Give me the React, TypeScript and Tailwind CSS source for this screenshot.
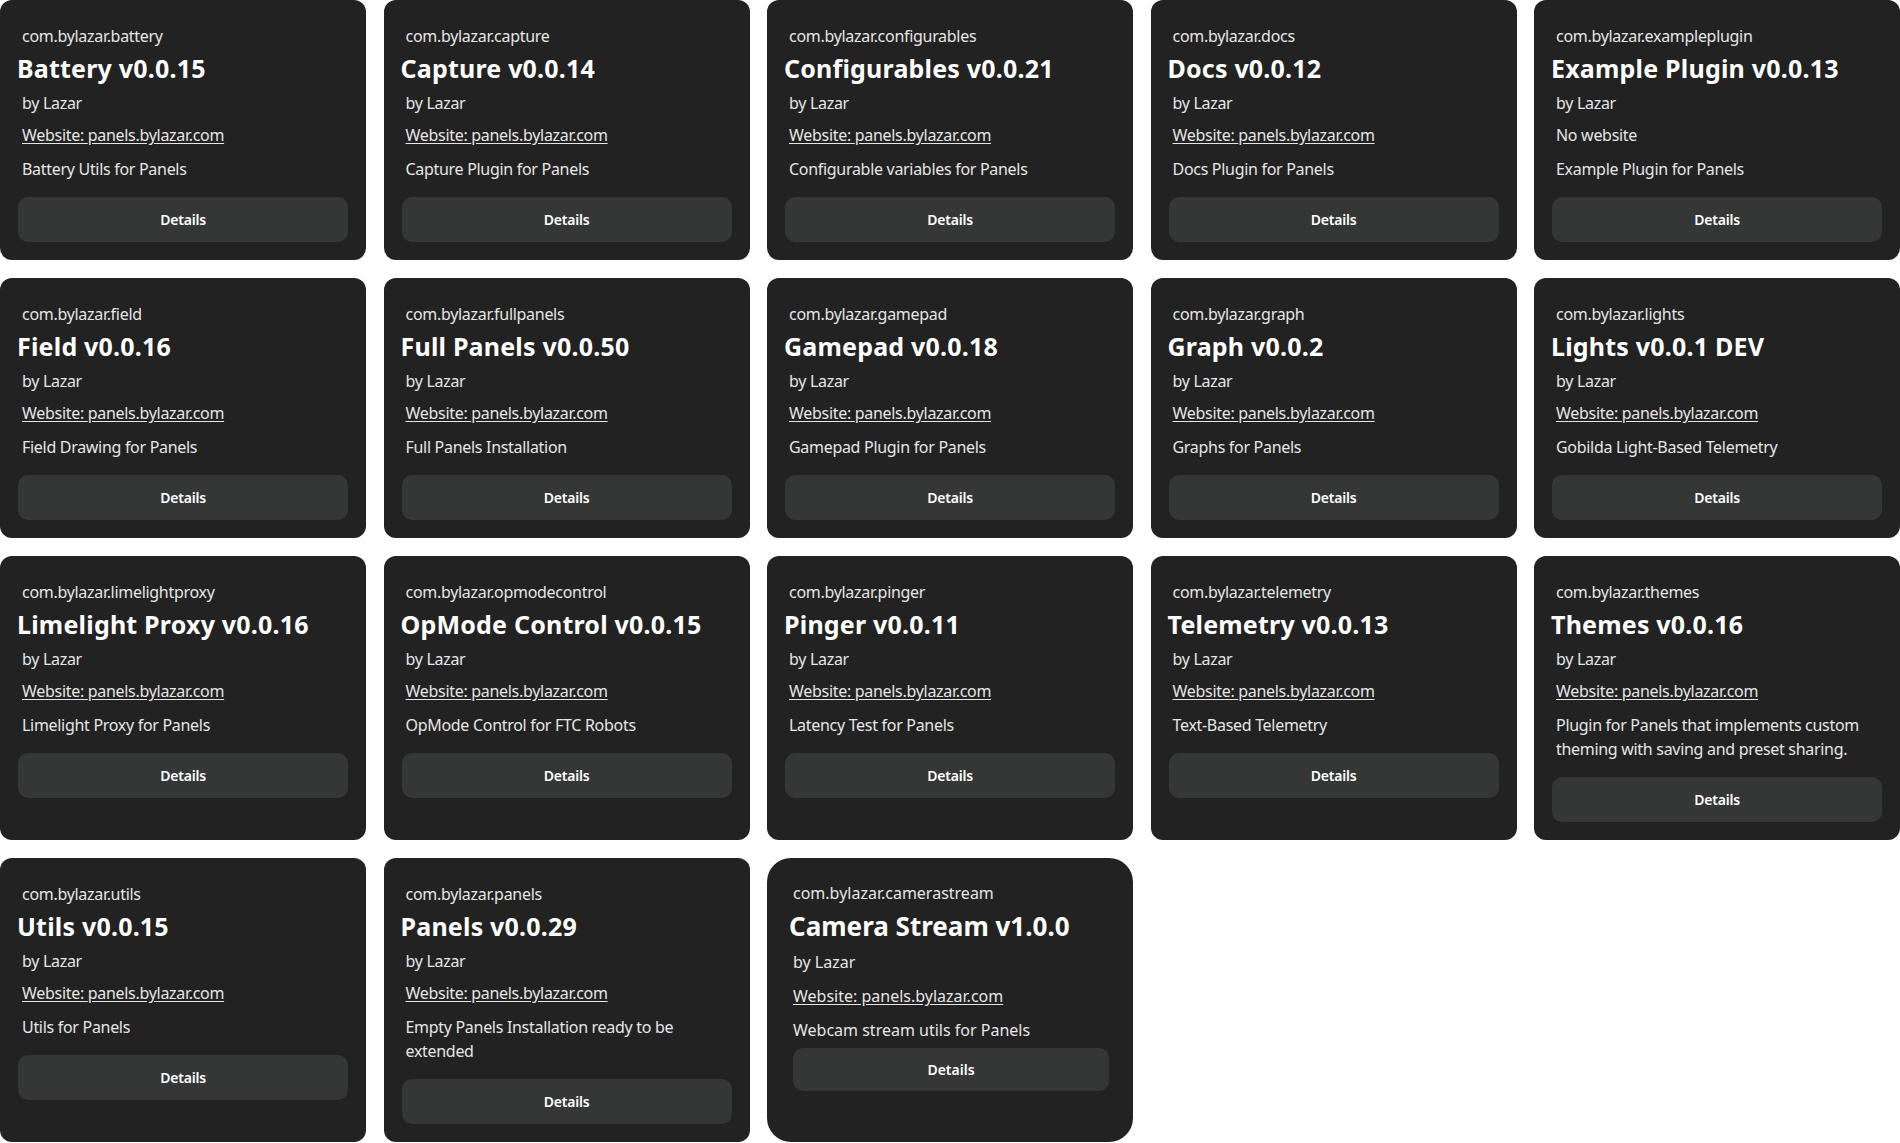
type Plugin = {
  id: string;
  name: string;
  version: string;
  website?: string;
  description: string;
};

const plugins: Plugin[] = [
  { id: "com.bylazar.battery", name: "Battery", version: "v0.0.15", website: "panels.bylazar.com", description: "Battery Utils for Panels" },
  { id: "com.bylazar.capture", name: "Capture", version: "v0.0.14", website: "panels.bylazar.com", description: "Capture Plugin for Panels" },
  { id: "com.bylazar.configurables", name: "Configurables", version: "v0.0.21", website: "panels.bylazar.com", description: "Configurable variables for Panels" },
  { id: "com.bylazar.docs", name: "Docs", version: "v0.0.12", website: "panels.bylazar.com", description: "Docs Plugin for Panels" },
  { id: "com.bylazar.exampleplugin", name: "Example Plugin", version: "v0.0.13", description: "Example Plugin for Panels" },
  { id: "com.bylazar.field", name: "Field", version: "v0.0.16", website: "panels.bylazar.com", description: "Field Drawing for Panels" },
  { id: "com.bylazar.fullpanels", name: "Full Panels", version: "v0.0.50", website: "panels.bylazar.com", description: "Full Panels Installation" },
  { id: "com.bylazar.gamepad", name: "Gamepad", version: "v0.0.18", website: "panels.bylazar.com", description: "Gamepad Plugin for Panels" },
  { id: "com.bylazar.graph", name: "Graph", version: "v0.0.2", website: "panels.bylazar.com", description: "Graphs for Panels" },
  { id: "com.bylazar.lights", name: "Lights", version: "v0.0.1 DEV", website: "panels.bylazar.com", description: "Gobilda Light-Based Telemetry" },
  { id: "com.bylazar.limelightproxy", name: "Limelight Proxy", version: "v0.0.16", website: "panels.bylazar.com", description: "Limelight Proxy for Panels" },
  { id: "com.bylazar.opmodecontrol", name: "OpMode Control", version: "v0.0.15", website: "panels.bylazar.com", description: "OpMode Control for FTC Robots" },
  { id: "com.bylazar.pinger", name: "Pinger", version: "v0.0.11", website: "panels.bylazar.com", description: "Latency Test for Panels" },
  { id: "com.bylazar.telemetry", name: "Telemetry", version: "v0.0.13", website: "panels.bylazar.com", description: "Text-Based Telemetry" },
  { id: "com.bylazar.themes", name: "Themes", version: "v0.0.16", website: "panels.bylazar.com", description: "Plugin for Panels that implements custom theming with saving and preset sharing." },
  { id: "com.bylazar.utils", name: "Utils", version: "v0.0.15", website: "panels.bylazar.com", description: "Utils for Panels" },
  { id: "com.bylazar.panels", name: "Panels", version: "v0.0.29", website: "panels.bylazar.com", description: "Empty Panels Installation ready to be extended" },
];

function PluginCard({ p }: { p: Plugin }) {
  return (
    <div className="bg-[#212221] rounded-[12px] px-[18px] pt-[24px] pb-[18px] flex flex-col text-[#e6e6e6]">
      <div className="ml-1 text-[16px] leading-[24px] tracking-[-0.3px]">{p.id}</div>
      <h2 className="-ml-px mt-1 text-[25px] leading-[32px] font-bold text-white tracking-[0.2px]">
        {p.name} {p.version}
      </h2>
      <div className="ml-1 mt-[7px] text-[16px] leading-[24px] tracking-[-0.3px]">by Lazar</div>
      {p.website ? (
        <a href="#" className="ml-1 mt-2 text-[16px] leading-[24px] tracking-[-0.3px] underline underline-offset-2 self-start">
          Website: {p.website}
        </a>
      ) : (
        <div className="ml-1 mt-2 text-[16px] leading-[24px] tracking-[-0.3px]">No website</div>
      )}
      <p className="ml-1 mt-[10px] text-[16px] leading-[24px] tracking-[-0.3px]">{p.description}</p>
      <button className="mt-4 h-[45px] w-full rounded-[10px] bg-[#353636] text-[14px] font-semibold text-white tracking-[-0.2px]">
        Details
      </button>
    </div>
  );
}

function CameraCard() {
  return (
    <div className="bg-[#212221] rounded-[24px] pl-[26px] pr-[24px] pt-[23px] pb-[18px] flex flex-col text-[#e6e6e6]">
      <div className="text-[16px] leading-[24px]">com.bylazar.camerastream</div>
      <h2 className="-ml-1 mt-1 text-[26px] leading-[34px] font-bold text-white">Camera Stream v1.0.0</h2>
      <div className="mt-[7px] text-[16px] leading-[24px]">by Lazar</div>
      <a href="#" className="mt-[10px] text-[16px] leading-[24px] underline underline-offset-2 self-start">
        Website: panels.bylazar.com
      </a>
      <p className="mt-[10px] text-[16px] leading-[24px]">Webcam stream utils for Panels</p>
      <button className="mt-[6px] h-[43px] w-full rounded-[10px] bg-[#353636] text-[14px] font-semibold text-white">
        Details
      </button>
    </div>
  );
}

export default function App() {
  return (
    <div className="min-h-screen bg-white font-['Noto_Sans',sans-serif]">
      <div className="grid grid-cols-5 gap-x-[17.5px] gap-y-[18px]">
        {plugins.map((p) => (
          <PluginCard key={p.id} p={p} />
        ))}
        <CameraCard />
      </div>
    </div>
  );
}
